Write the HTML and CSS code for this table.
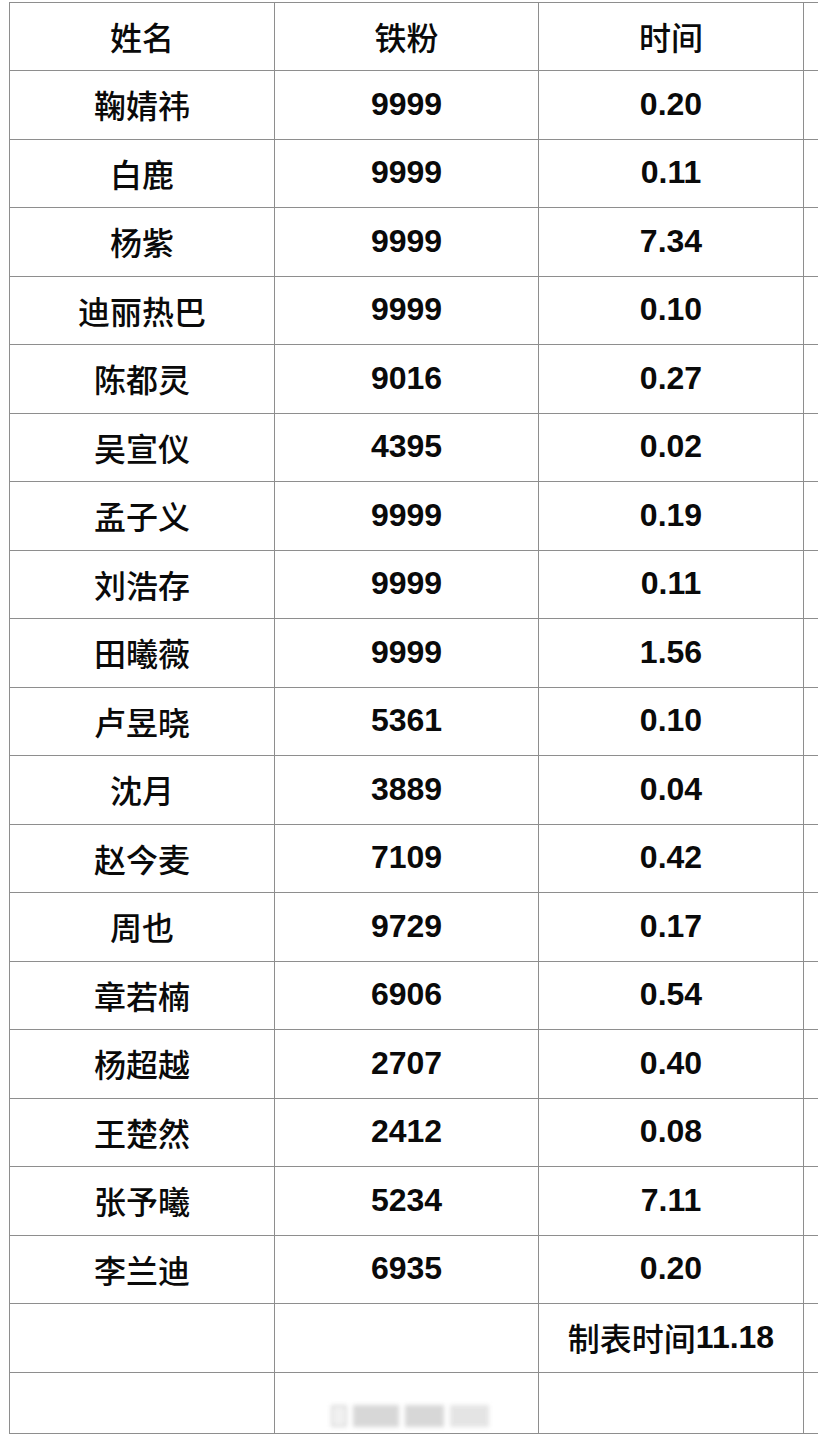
FILE: index.html
```html
<!DOCTYPE html>
<html lang="zh">
<head>
<meta charset="utf-8">
<title>铁粉</title>
<link rel="stylesheet" href="styles.css">
</head>
<body>
<div class="sheet">
  <div class="cell zh">姓名</div><div class="cell zh">铁粉</div><div class="cell zh">时间</div><div class="cell"></div>
  <div class="cell zh">鞠婧祎</div><div class="cell num">9999</div><div class="cell num">0.20</div><div class="cell"></div>
  <div class="cell zh">白鹿</div><div class="cell num">9999</div><div class="cell num">0.11</div><div class="cell"></div>
  <div class="cell zh">杨紫</div><div class="cell num">9999</div><div class="cell num">7.34</div><div class="cell"></div>
  <div class="cell zh">迪丽热巴</div><div class="cell num">9999</div><div class="cell num">0.10</div><div class="cell"></div>
  <div class="cell zh">陈都灵</div><div class="cell num">9016</div><div class="cell num">0.27</div><div class="cell"></div>
  <div class="cell zh">吴宣仪</div><div class="cell num">4395</div><div class="cell num">0.02</div><div class="cell"></div>
  <div class="cell zh">孟子义</div><div class="cell num">9999</div><div class="cell num">0.19</div><div class="cell"></div>
  <div class="cell zh">刘浩存</div><div class="cell num">9999</div><div class="cell num">0.11</div><div class="cell"></div>
  <div class="cell zh">田曦薇</div><div class="cell num">9999</div><div class="cell num">1.56</div><div class="cell"></div>
  <div class="cell zh">卢昱晓</div><div class="cell num">5361</div><div class="cell num">0.10</div><div class="cell"></div>
  <div class="cell zh">沈月</div><div class="cell num">3889</div><div class="cell num">0.04</div><div class="cell"></div>
  <div class="cell zh">赵今麦</div><div class="cell num">7109</div><div class="cell num">0.42</div><div class="cell"></div>
  <div class="cell zh">周也</div><div class="cell num">9729</div><div class="cell num">0.17</div><div class="cell"></div>
  <div class="cell zh">章若楠</div><div class="cell num">6906</div><div class="cell num">0.54</div><div class="cell"></div>
  <div class="cell zh">杨超越</div><div class="cell num">2707</div><div class="cell num">0.40</div><div class="cell"></div>
  <div class="cell zh">王楚然</div><div class="cell num">2412</div><div class="cell num">0.08</div><div class="cell"></div>
  <div class="cell zh">张予曦</div><div class="cell num">5234</div><div class="cell num">7.11</div><div class="cell"></div>
  <div class="cell zh">李兰迪</div><div class="cell num">6935</div><div class="cell num">0.20</div><div class="cell"></div>
  <div class="cell"></div><div class="cell"></div><div class="cell foot"><span class="zh-in">制表时间</span><span class="num-in">11.18</span></div><div class="cell"></div>
  <div class="cell"></div><div class="cell mark-host"><div class="mark"><span class="m1"></span><span class="m2"></span><span class="m3"></span><span class="m4"></span></div></div><div class="cell"></div><div class="cell"></div>
</div>
</body>
</html>
```

FILE: styles.css
```css
html, body {
  margin: 0;
  padding: 0;
  background: #fff;
  overflow: hidden;
}
body {
  width: 818px;
  height: 1438px;
  padding: 2px 0 0 9px;
  box-sizing: border-box;
  color: #0a0a0a;
}
.sheet {
  display: grid;
  grid-template-columns: 265px 264px 265px 40px;
  grid-template-rows: repeat(10, 68px 69px) 61px;
  border-top: 1px solid #8e8e8e;
  border-left: 1px solid #8e8e8e;
  width: max-content;
}
.cell {
  box-sizing: border-box;
  border-right: 1px solid #8e8e8e;
  border-bottom: 1px solid #8e8e8e;
  display: flex;
  align-items: center;
  justify-content: center;
  padding-bottom: 2px;
}
.zh, .zh-in {
  font-family: "Noto Sans CJK SC", sans-serif;
  font-weight: 500;
  font-size: 32px;
}
.num, .num-in {
  font-family: "Liberation Sans", Arial, sans-serif;
  font-weight: 700;
  font-size: 32px;
}
.foot {
  white-space: nowrap;
}
.mark-host {
  position: relative;
}
.mark {
  position: absolute;
  left: 56px;
  top: 32px;
  width: 158px;
  height: 22px;
  display: flex;
  gap: 6px;
  filter: blur(2px);
  opacity: 0.55;
}
.mark span {
  display: block;
  background: #b8b8b8;
}
.m1 { width: 12px; background: #e6e6e6 !important; border: 2px solid #bbb; }
.m2 { width: 48px; }
.m3 { width: 40px; }
.m4 { width: 40px; background: #cfcfcf !important; }
```
